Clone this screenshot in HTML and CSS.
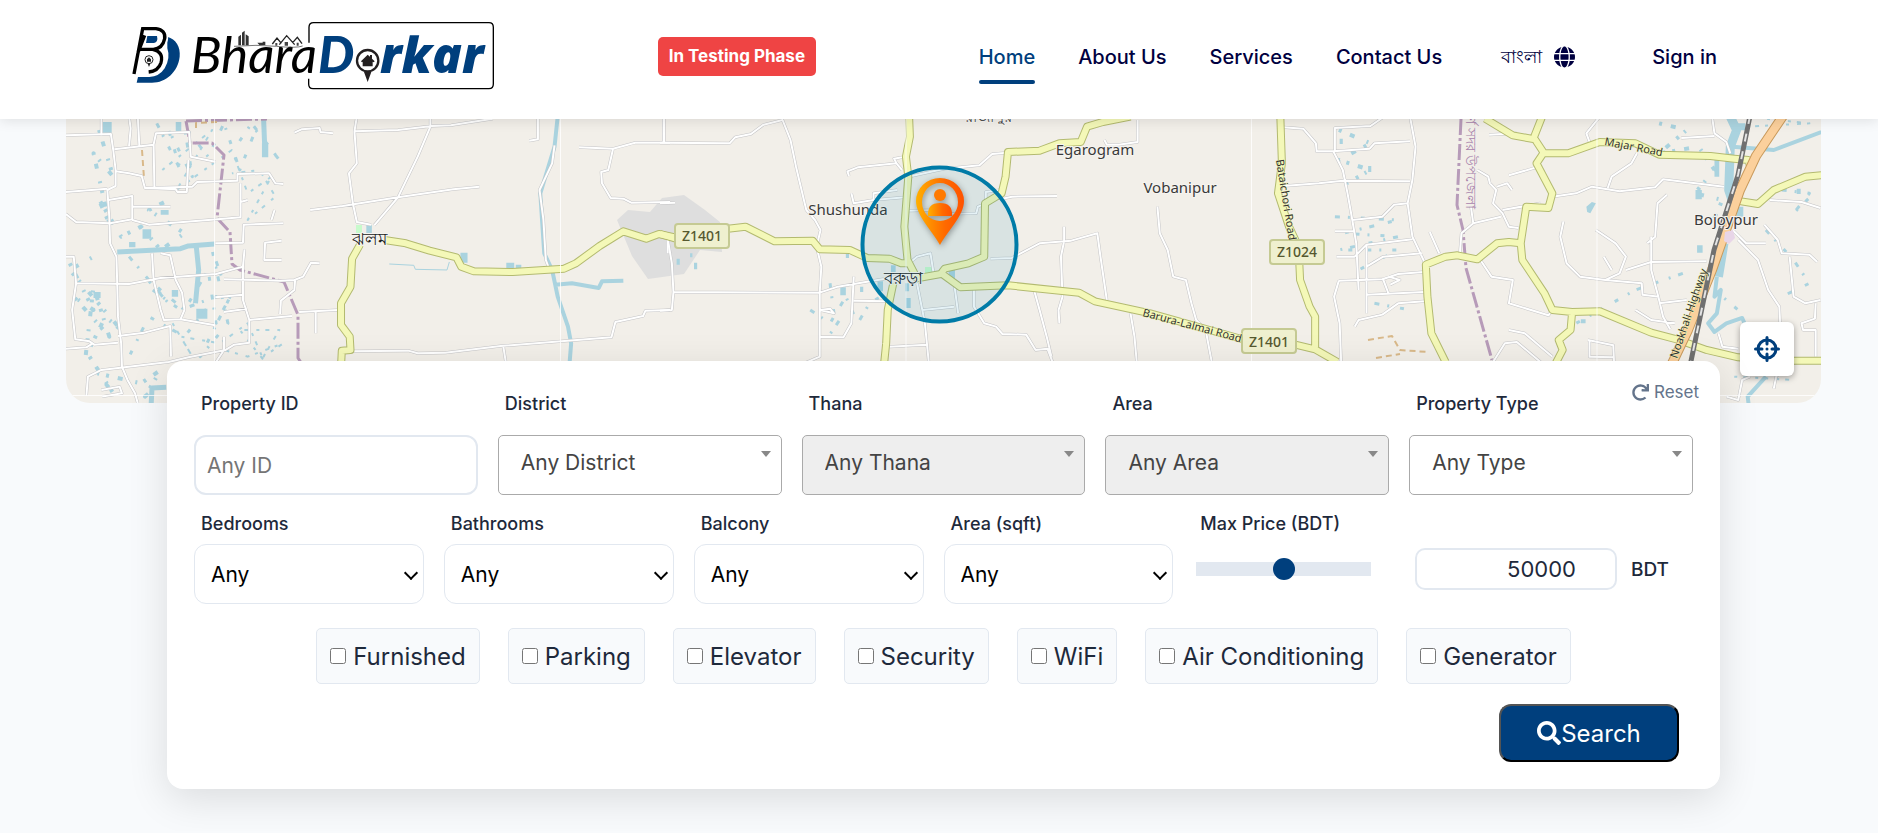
FILE: index.html
```html
<!DOCTYPE html>
<html lang="en">
<head>
<meta charset="utf-8">
<meta name="viewport" content="width=device-width, initial-scale=1">
<title>BharaDorkar</title>
<link rel="stylesheet" href="styles.css">
</head>
<body>
<header class="site-header">
  <a class="logo" href="#" aria-label="BharaDorkar">
    <svg viewBox="0 0 364 70">
      <g transform="scale(.33333) translate(-63 -63)">
        <path d="M172 110 C198 118 212 140 209 170 C204 215 168 248 126 248 H80 L84 231 H118 Q148 230 164 205 Q182 174 172 145 Z" fill="#003f7d"/>
        <path d="M72 221 L98 87 H140 Q168 90 164 118 Q158 146 130 148 H86 M128 148 Q162 156 153 188 Q145 213 116 216" fill="none" stroke="#fff" stroke-width="20"/>
        <path d="M72 222 L98 86 H138 Q168 90 164 116 Q158 146 130 148 H86 M84 158 L104 106 M128 148 Q162 156 153 188 Q145 213 116 216" fill="none" stroke="#000" stroke-width="10"/>
        <path d="M112 108 H141 Q145 126 132 129 H108 Z" fill="#003f7d"/>
        <circle cx="117" cy="179" r="12" fill="#fff" stroke="#222" stroke-width="3"/>
        <path d="M111 178 l6 -6 6 6 v7 h-12z M113 191 h8 l-4 10z" fill="#222"/>
        <text class="logo-light" x="242" y="218">Bhara</text>
        <path d="M372 139 Q440 133 500 139 T578 138" fill="none" stroke="#333" stroke-width="2"/>
        <path d="M385 136 V110 l8 -6 v32z M396 136 V98 l8 -6 v44z M407 136 V103 l9 6 v27z M442 128 h16 v-3 h8 v10 h-18z" fill="#333"/>
        <path d="M487 132 l14 -18 13 16 M508 134 l22 -27 24 27 M548 128 l14 -16 14 19" fill="none" stroke="#222" stroke-width="4"/>
        <path d="M524 137 v-11 h10 v11z M496 137 v-8 h6 v8z M560 137 v-9 h6 v9z" fill="#444"/>
        <path d="M597 128 V82 Q597 68 611 68 H1137 Q1150 68 1150 82 V252 Q1150 266 1137 266 H609 Q596 266 596 252 V236" fill="none" stroke="#000" stroke-width="4"/>
        <text class="logo-bold" x="624" y="218">D</text>
        <circle cx="773" cy="182" r="32" fill="#fff" stroke="#231f20" stroke-width="7"/>
        <path d="M762 216 H784 L773 246 Z M753 184 L773 164 780 170 V165 h6 v11 l8 8 -3 3 -3 -2 v14 h-30 v-14 l-2 2z" fill="#231f20"/>
        <text class="logo-bold logo-wide" x="810" y="218">rkar</text>
      </g>
    </svg>
  </a>
  <span class="badge">In Testing Phase</span>
  <nav class="nav">
    <a class="nav-link active" href="#">Home</a>
    <a class="nav-link" href="#">About Us</a>
    <a class="nav-link" href="#">Services</a>
    <a class="nav-link" href="#">Contact Us</a>
    <a class="nav-link lang" href="#"><span lang="bn">বাংলা</span>
      <svg viewBox="0 0 496 512" width="21" height="22" fill="currentColor" aria-hidden="true"><path d="M336.5 160C322 70.7 287.8 8 248 8s-74 62.7-88.5 152h177zM152 256c0 22.2 1.2 43.5 3.3 64h185.3c2.1-20.5 3.3-41.8 3.3-64s-1.2-43.5-3.3-64H155.3c-2.1 20.5-3.3 41.8-3.3 64zm324.7-96c-28.6-67.9-86.5-120.4-158-141.6 24.4 33.8 41.2 84.7 50 141.6h108zM177.2 18.4C105.8 39.6 47.8 92.1 19.3 160h108c8.7-56.9 25.5-107.8 49.9-141.6zM487.4 192H372.7c2.1 21 3.3 42.5 3.3 64s-1.2 43-3.3 64h114.6c5.5-20.5 8.6-41.8 8.6-64s-3.1-43.5-8.5-64zM120 256c0-21.5 1.2-43 3.3-64H8.6C3.2 212.5 0 233.8 0 256s3.2 43.5 8.6 64h114.6c-2-21-3.2-42.5-3.2-64zm39.5 96c14.5 89.3 48.7 152 88.5 152s74-62.7 88.5-152h-177zm159.3 141.6c71.4-21.2 129.4-73.7 158-141.6h-108c-8.8 56.9-25.6 107.8-50 141.6zM19.3 352c28.6 67.9 86.5 120.4 158 141.6-24.4-33.8-41.2-84.7-50-141.6h-108z"/></svg>
    </a>
    <a class="nav-link" href="#">Sign in</a>
  </nav>
</header>

<main class="page">
  <section class="map" aria-label="Map">
    <svg class="map-canvas" viewBox="66 119 1755 284" preserveAspectRatio="xMidYMid slice">
      <defs>
        <linearGradient id="pin" x1="0" x2="1"><stop offset="0" stop-color="#ffb000"/><stop offset=".6" stop-color="#ff6a00"/><stop offset="1" stop-color="#ff5200"/></linearGradient>
        <g id="lanes">
          <g transform="translate(50 110) scale(.3954 .3333)">
            <path d="M40 76 L154 72 160 120 166 180 166 228 145 240 150 320 152 400 168 440 170 520 172 620 180 700 182 770 196 810 215 850 222 880"/>
            <path d="M130 76 V20 M200 20 L204 55 200 108 M222 20 L226 108 M163 118 L262 104 268 70 352 66 356 140 418 155 M262 104 L264 230 M166 184 L200 190 232 198 240 234 318 238 322 246 346 246 350 150 M40 246 L145 236 M240 234 L360 230 372 216 474 212 474 192 554 190 570 220 590 222 M40 312 L66 336 152 340 208 328 208 258 148 270 M208 290 L305 290 M208 330 L250 344 424 328 482 322 482 220 M482 276 L500 270 M418 400 L488 398 490 344 590 340"/>
            <path d="M40 440 L60 440 66 520 200 522 280 504 420 492 488 470 492 418 M66 520 L56 600 64 688 100 694 112 704 172 698 M40 716 L92 712 108 700 M258 430 L262 510 280 600 288 630 330 628 340 600 334 548 318 510 304 436 280 430 M330 628 L418 646 M172 678 L238 668 304 648 306 740 M440 508 L584 512 618 510 640 500 660 458 682 460 M488 470 V570 L504 630 504 698 466 704 444 720 350 742 300 756 130 780 96 800 92 858 M418 562 L488 554 M440 606 L498 596 M504 630 L612 618 M620 508 L618 540 584 572 582 612 M630 606 L728 600 M672 606 V670 M130 840 L176 830 182 850 132 860 M586 392 L544 398 542 450 586 450 M568 300 L560 330 M440 680 V720 L420 756"/>
            <path d="M618 68 L636 58 682 54 684 66 716 70 M776 20 L770 64 880 60 966 48 1014 46 1120 26 M770 64 L776 160 756 190 766 280 776 336 812 344 M658 300 L740 288 880 262 1020 238 1086 230 M962 20 V50 L930 140 880 262 820 346 M1234 20 V88 L1212 92 M1276 106 L1270 160 1238 240 1248 330 1254 450 1266 488 M1338 112 L1424 116 1480 98 1568 98 M1552 98 V20 M1424 116 L1412 180 1394 186 1396 220 1418 264 1450 266 1470 278 1568 276 M750 724 L906 722 930 730 1000 728 1140 708 1420 682 1430 636 1500 618 1506 602 1568 600 M1146 706 L1156 780 M1562 390 V430"/>
          </g>
          <g transform="translate(660 110) scale(.3954 .3333)">
            <path d="M0 98 L176 100 190 82 230 72 262 44 310 30 330 90 344 170 356 230 370 300 392 330 406 360 396 410 408 470 404 546 404 740 364 760 M10 20 V98 M0 280 L38 278 M20 390 L30 460 34 546 30 600 0 602 M34 546 L404 548 450 530 520 516 600 500 M404 548 V600 L440 610 430 596 404 600 M404 680 L464 682 484 640 490 500 M490 572 L574 574 M478 198 L474 184 500 172 598 160 612 180 M598 160 L592 146 612 142 M484 250 L490 280 540 270 620 262 M540 270 V250 L600 240 M628 200 L720 176 808 166 840 132 878 128 M628 302 L700 300 720 312 800 310 804 290 826 280 M824 280 V246 L860 240"/>
            <path d="M620 470 L650 440 684 430 692 490 M650 520 L670 640 680 760 M580 710 L674 704 M664 600 L744 590 M744 520 L754 610 M794 530 V590 L820 640 850 650 866 672 926 674 950 720 980 716 994 760 M866 266 L890 260 1004 258 M836 446 L890 444 960 400 1040 392 1106 370 1114 440 1130 570 M1022 350 V394 L1014 440 1018 560 1008 600 1010 640 M946 540 L960 600 978 680 990 740 M1208 30 V96 L1160 104 1130 104 1124 90 M1258 290 L1264 370 1284 420 1298 500 1330 510 1344 580 1356 630 1380 660 1396 760 M1190 610 L1200 680 1206 760"/>
          </g>
          <g transform="translate(1240 110) scale(.3954 .3333)">
            <path d="M110 52 L160 56 192 100 194 124 236 124 328 116 340 100 430 94 M240 124 V54 L330 48 364 20 M430 20 L444 110 436 210 424 280 436 380 468 460 M110 228 L200 220 260 212 430 214 M236 124 L260 180 272 250 284 330 294 400 300 540 M284 330 L360 320 390 284 424 280 M240 364 H290 M244 440 H290 L320 404 436 388 M320 404 V610 M320 470 L362 440 460 430 M250 512 L360 508 400 492 464 486 M362 508 L376 552 M320 554 L466 546 M290 650 L300 630 360 614 400 580 466 574 M250 512 L238 560 252 640 256 760 M376 500 L404 510 380 524"/>
            <path d="M600 180 L628 200 632 220 648 240 640 280 664 310 680 350 704 354 M650 230 L676 220 688 240 M584 290 L590 340 560 370 556 430 M590 340 L660 320 M480 366 L504 430 M608 450 L636 500 690 510 680 580 780 616 790 600 M664 300 L760 280 M680 196 L750 172 M630 74 L700 70 M884 96 L876 70 910 20 M790 260 L850 250 890 230 960 244 1050 232 1070 208 1224 230 M930 234 L940 200 990 160 1004 130 M900 360 L950 400 976 440 960 490 924 510 860 500 826 460 810 380 818 334 M920 440 L940 480 M976 480 L1040 456 1180 454 M1080 254 L1056 280 1050 380 1030 400 M1040 380 V480 L1058 560 1070 620 1088 658 M924 510 L1016 520 1018 554 1060 560 M1000 600 L1040 630 1100 640 M1060 580 L1130 570"/>
            <path d="M640 756 L670 700 700 696 760 756 M680 660 L720 670 760 710 790 740 M880 690 L944 706 946 756 M884 690 V740 L946 742 M1116 84 L1200 78 M1194 20 L1200 70 1230 96 1240 130 M1340 270 L1420 276 1468 294 M1246 360 L1280 400 1330 400 M1260 390 L1310 450 1336 540 1364 590 1366 640 M1326 344 L1360 390 1370 430 1440 434 1460 456 M1390 440 L1400 560 1430 580 1468 570 M1456 580 L1454 626 1420 640 1424 660 1456 660 V740 M1210 670 L1220 710 1260 716 M1350 836 L1356 800 1380 770 M1230 860 L1260 870 1270 810 1290 800"/>
          </g>
        </g>
        <g id="highways">
          <g transform="translate(50 110) scale(.3954 .3333)">
            <path d="M846 390 L900 400 960 422 1028 442 1040 470 1072 484 1170 486 1300 476 1330 460 1390 408 1450 364 1508 386 1540 372 1610 390 M784 404 L764 446 760 530 736 580 736 645 758 680 760 720 738 722 736 770"/>
          </g>
          <g transform="translate(660 110) scale(.3954 .3333)">
            <path d="M630 20 L632 80 622 140 628 200 618 350 626 450 650 505 710 492 720 476 780 460 820 440 822 280 864 250 874 200 880 126 960 122 1010 100 1064 96 1080 50 1120 36 1190 20 M0 372 L40 386 M172 356 L216 350 290 394 386 392 404 418 480 420 524 444 580 446 610 460 634 460 M716 494 L760 532 880 526 1060 548 1100 574 1240 610 1480 690 M590 520 L576 600 572 700 566 770"/>
          </g>
          <g transform="translate(1240 110) scale(.3954 .3333)">
            <path d="M102 20 L106 160 96 250 124 350 148 410 152 510 176 590 190 620 190 712 M140 704 L190 718 246 756 M620 26 L690 76 746 88 768 128 750 160 790 250 780 294 724 290 710 400 680 396 650 400 600 448 550 436 520 440 470 464 474 560 484 670 520 756 M764 20 L744 80 M768 130 L830 130 910 96 1000 100 1060 134 1190 138 1250 146 1286 150 1290 170 M710 400 L714 450 770 550 790 600 840 606 910 604 1040 668 1110 690 1180 720 1260 742 1360 752 1470 752 M840 606 L836 660 806 690 816 720 794 770 M1256 272 L1310 282 1350 240 1430 200 1470 196"/>
          </g>
        </g>
      </defs>
      <rect x="66" y="119" width="1755" height="284" fill="#f2efe9"/>
      <path d="M617 220 L628 210 650 212 662 198 684 195 705 210 720 222 722 252 700 250 684 274 648 279 632 256Z" fill="#dedede"/>
      <path d="M356 225 h6 v9 h-6z M925 267 h7 v8 h-7z" fill="#c8facc"/>
      <g transform="translate(50 110) scale(.3954 .3333)">
        <g class="stream">
          <path d="M1284 20 L1276 110 1240 250 1250 430 1270 480 1284 560 1310 650 1318 700 1314 760 M1278 524 L1320 520 1388 534 1396 514 1450 512" stroke-width="4"/>
          <path d="M170 426 L330 416 350 408 416 402 M370 410 L376 480 368 580 M540 20 L544 140 M256 880 L258 834 294 832" stroke-width="5"/>
          <path d="M858 462 L920 466 924 478 1004 480 1010 456" stroke-width="1"/>
        </g>
        <g class="pond">
          <path d="M130 36h26v32h-26z M318 36h14v34h-14z M536 100h16v42h-16z M234 358h22v28h-22z M370 596h28v30h-28z M800 346h14v24h-14z M1038 428h18v30h-18z M1154 458h20v16h-20z M1178 464h14v14h-14z M110 546h18v18h-18z M308 540h16v20h-16z M200 396h16v16h-16z M280 300h20v14h-20z"/>
        </g>
        <g class="ponds">
          <path class="d1" d="M124 60 L160 200 110 130 150 340 120 260 180 380 230 350 280 420 340 370 250 300 300 270"/>
          <path class="d2" d="M270 40 L330 180 300 60 360 200 340 50 400 140 440 40 480 180 520 60 580 150 510 40 470 110"/>
          <path class="d3" d="M284 180 L410 60 320 240 460 120 500 250 560 200 500 330 570 260 530 180 460 190"/>
          <path class="d1" d="M50 460 L110 600 60 560 150 680 110 530 90 740 140 620 180 660 50 480 110 440"/>
          <path class="d2" d="M200 440 L300 580 240 500 340 600 400 480 420 640 460 550 380 740 450 640 410 420 440 520"/>
          <path class="d3" d="M310 640 L360 740 330 680 430 700 500 640 540 750 480 660 580 660 540 740 590 700 500 740 440 720"/>
          <path class="d1" d="M100 740 L160 850 120 790 230 820 280 780 240 860 270 830"/>
          <path class="d2" d="M260 540 L330 600 420 560 340 680 250 620 200 740"/>
        </g>
      </g>
      <g transform="translate(660 110) scale(.3954 .3333)">
        <path class="pond" d="M584 466h12v20h-12z M730 480h16v30h-16z M622 564h12v30h-12z M550 514h14v30h-14z M456 532h14v24h-14z M620 520h10v24h-10z M506 530h8v16h-8z M42 446h8v18h-8z M76 430h6v12h-6z M86 458h8v20h-8z M470 432h8v12h-8z"/>
        <path class="ponds d2" d="M380 600 L430 640 470 560 500 640 530 580 600 530 M430 520 L440 610 460 620 420 690"/>
      </g>
      <g transform="translate(1240 110) scale(.3954 .3333)">
        <g class="stream">
          <path d="M1240 20 L1256 60 1240 110 1236 240 1250 290 M1224 400 L1210 500" stroke-width="9"/>
          <path d="M1246 110 L1350 120 1470 66 M1206 500 L1200 560 1216 540 1206 610 1184 640 1200 666 1230 640 1270 624 1276 640 M1330 800 L1284 860 1286 880" stroke-width="4"/>
          <path d="M1250 50 h28 M1264 290 V320" stroke-width="7"/>
        </g>
        <path class="pond" d="M876 290 l14 -14 10 4 -14 30 -8 -4z M862 628h12v12h-12z M1152 240h16v28h-16z M1156 406h14v22h-14z M1200 150h12v50h-12z M324 168h8v18h-8z M252 86h8v16h-8z M1408 236h10v16h-10z"/>
        <g class="ponds">
          <path class="d1" d="M250 60 L330 100 250 150 330 180 270 220"/>
          <path class="d2" d="M240 320 L400 330 260 370 400 380 250 420 400 420 300 480 280 500 M340 580 L430 600"/>
          <path class="d1" d="M1060 40 L1130 60 1060 130 1160 110 1200 180 1150 250 1220 270 1190 350"/>
          <path class="d2" d="M1370 240 L1440 250 1400 310 1460 240 M1330 360 L1400 450 1440 520 1370 560 M1120 490 L1000 540 850 640 M1200 540 L1260 600"/>
          <path class="d3" d="M1280 20 L1440 40 1280 50 M1250 800 L1400 810"/>
        </g>
      </g>
      <g class="boundary">
        <path d="M186 121 L267 119 M186 121 L190 143 212 143 224 155 217 218 230 232 232 264 240 270 284 282 298 315 298 358 302 364"/>
        <path d="M1461 119 L1457 205 1463 230 1466 268 1492 360"/>
      </g>
      <g class="track"><path d="M142 150 L144 178 M196 128 V123 L218 122 M1368 340 L1392 336 1400 350 1428 352 M1376 358 L1400 354"/></g>
      <use href="#lanes" class="lane-case"/><use href="#lanes" class="lane"/>
      <use href="#highways" class="road-case"/><use href="#highways" class="road"/>
      <path class="trunk-case" d="M1785 113 L1756 156 1740 190 1712 270 1688 330 1668 372"/>
      <path class="trunk" d="M1785 113 L1756 156 1740 190 1712 270 1688 330 1668 372"/>
      <path class="rail" d="M1750 116 L1738 175 1714 250 1690 366"/>
      <path class="rail-dash" d="M1750 116 L1738 175 1714 250 1690 366"/>
      <path d="M1725 232 l8 -2 2 8 -6 6 -5 -3z" fill="#e8d5e8"/>
      <path d="M214.500 119V403 M560.500 119V403 M906 119V403 M1251.500 119V403 M1597 119V403 M66 395.500H1821" stroke="#fff" stroke-opacity=".8" fill="none"/>
      <g class="shield">
        <rect x="675" y="224" width="54" height="24" rx="3"/><rect x="1270" y="240" width="54" height="24" rx="3"/><rect x="1242" y="329" width="54" height="24" rx="3"/>
      </g>
      <g class="shield-text"><text x="702" y="241">Z1401</text><text x="1297" y="257">Z1024</text><text x="1269" y="347">Z1401</text></g>
      <g class="place">
        <text x="1095" y="155">Egarogram</text><text x="1180" y="193">Vobanipur</text><text x="848" y="215">Shushunda</text><text x="1726" y="225">Bojoypur</text>
        <text class="bn" x="369" y="245">ঝলম</text><text class="bn" x="903" y="284">বরুড়া</text><text x="988" y="122">রাজাপুর</text>
      </g>
      <g class="street">
        <text transform="translate(1276 160) rotate(81)">Bataichori Road</text>
        <text transform="translate(1142 316) rotate(15)">Barura-Lalmai Road</text>
        <text transform="translate(1604 145) rotate(11)">Majar Road</text>
        <text transform="translate(1677 359) rotate(-71)">Noakhali Highway</text>
      </g>
      <text class="district" transform="translate(1466 116) rotate(90)">র্ণ সদর উপজেলা</text>
      <circle cx="939.500" cy="244.500" r="77" fill="#007ba7" fill-opacity=".1" stroke="#007ba7" stroke-width="4"/>
      <g class="marker">
        <path fill-rule="evenodd" fill="url(#pin)" d="M940 245 C932 230 916 216 916 201 A24 23 0 0 1 964 201 C964 216 948 230 940 245Z M940 183 A18 19 0 1 0 940 221 A18 19 0 1 0 940 183Z"/>
        <path fill="url(#pin)" d="M928 216 Q927 203 940 203 Q953 203 952 216Z"/><circle cx="940" cy="195" r="6" fill="#ff7a00"/>
      </g>
    </svg>
    <button class="locate" type="button" aria-label="My location">
      <svg viewBox="0 0 26 26" width="26" height="26" fill="none" stroke="currentColor" stroke-width="3" stroke-linecap="round"><circle cx="13" cy="13" r="9"/><path d="M13 1.500V8M13 18v6.500M1.500 13H8M18 13h6.500"/><circle cx="13" cy="13" r="1.500" fill="currentColor" stroke="none"/></svg>
    </button>
  </section>

  <form class="card">
    <button class="reset" type="reset"><svg viewBox="0 0 512 512" width="17" height="17" fill="currentColor" aria-hidden="true"><path d="M500.330 0h-47.410a12 12 0 0 0-12 12.570l4 82.760A247.420 247.420 0 0 0 256 8C119.340 8 7.900 119.530 8 256.190 8.100 393.070 119.100 504 256 504a247.100 247.100 0 0 0 166.180-63.910 12 12 0 0 0 .48-17.430l-34-34a12 12 0 0 0-16.380-.55A176 176 0 1 1 402.100 157.800l-101.530-4.870a12 12 0 0 0-12.570 12v47.410a12 12 0 0 0 12 12h200.330a12 12 0 0 0 12-12V12a12 12 0 0 0-12-12z"/></svg>Reset</button>

    <div class="row-main">
      <div class="field"><label for="pid">Property ID</label><input class="control text-input" id="pid" type="text" placeholder="Any ID"></div>
      <div class="field"><label for="district">District</label><div class="combo"><select class="control" id="district"><option>Any District</option></select></div></div>
      <div class="field"><label for="thana">Thana</label><div class="combo"><select class="control" id="thana" disabled><option>Any Thana</option></select></div></div>
      <div class="field"><label for="area">Area</label><div class="combo"><select class="control" id="area" disabled><option>Any Area</option></select></div></div>
      <div class="field"><label for="type">Property Type</label><div class="combo"><select class="control" id="type"><option>Any Type</option></select></div></div>
    </div>

    <div class="row-detail">
      <div class="field"><label for="beds">Bedrooms</label><div class="picker"><select class="control" id="beds"><option>Any</option></select></div></div>
      <div class="field"><label for="baths">Bathrooms</label><div class="picker"><select class="control" id="baths"><option>Any</option></select></div></div>
      <div class="field"><label for="balcony">Balcony</label><div class="picker"><select class="control" id="balcony"><option>Any</option></select></div></div>
      <div class="field"><label for="sqft">Area (sqft)</label><div class="picker"><select class="control" id="sqft"><option>Any</option></select></div></div>
      <div class="field"><label for="price">Max Price (BDT)</label>
        <div class="price">
          <input class="slider" id="price" type="range" min="0" max="100000" value="50000">
          <input class="amount" type="number" value="50000" aria-label="Max price amount">
          <span class="unit">BDT</span>
        </div>
      </div>
    </div>

    <div class="amenities">
      <label class="amenity"><input type="checkbox">Furnished</label>
      <label class="amenity"><input type="checkbox">Parking</label>
      <label class="amenity"><input type="checkbox">Elevator</label>
      <label class="amenity"><input type="checkbox">Security</label>
      <label class="amenity"><input type="checkbox">WiFi</label>
      <label class="amenity"><input type="checkbox">Air Conditioning</label>
      <label class="amenity"><input type="checkbox">Generator</label>
    </div>

    <div class="actions">
      <button class="search" type="submit"><svg viewBox="0 0 512 512" width="24" height="24" fill="currentColor" aria-hidden="true"><path d="M505 442.700L405.300 343c-4.500-4.500-10.600-7-17-7H372c27.600-35.300 44-79.700 44-128C416 93.100 322.900 0 208 0S0 93.100 0 208s93.100 208 208 208c48.300 0 92.700-16.400 128-44v16.300c0 6.400 2.500 12.500 7 17l99.700 99.700c9.400 9.400 24.600 9.400 33.900 0l28.300-28.300c9.400-9.400 9.400-24.600.1-34zM208 336c-70.700 0-128-57.200-128-128 0-70.700 57.200-128 128-128 70.700 0 128 57.200 128 128 0 70.700-57.200 128-128 128z"/></svg>Search</button>
    </div>
  </form>
</main>
</body>
</html>
```

FILE: styles.css
```css
* { box-sizing: border-box; }
body {
  margin: 0;
  background: #f8fafc;
  color: #1e293b;
  font-family: Inter, "Noto Sans", sans-serif;
}
button, input, select { font-family: inherit; margin: 0; }

.site-header {
  position: relative;
  z-index: 5;
  display: flex;
  align-items: center;
  justify-content: space-between;
  min-height: 119px;
  padding: 0 161px 6px 131px;
  background: #fff;
  box-shadow: 0 2px 12px rgba(0, 0, 0, .1);
}
.logo { margin-bottom: 2px; }
.logo svg { display: block; width: 364px; height: 70px; }
.logo-light { font: italic 400 154px Lato, sans-serif; fill: #000; }
.logo-bold { font: italic 900 154px Lato, sans-serif; fill: #003f7d; }
.logo-wide { font: italic 800 148px "Open Sans", sans-serif; }
.badge {
  padding: 8px 11px;
  border-radius: 5px;
  background: #ef4444;
  color: #fff;
  font-size: 17px;
  font-weight: 700;
  line-height: 23px;
}
.nav { display: flex; align-items: center; gap: 43px; }
.nav-link {
  position: relative;
  color: #000040;
  font-size: 20px;
  font-weight: 500;
  line-height: 24px;
  text-decoration: none;
}
.nav-link.active { color: #003f7d; }
.nav-link.active::after {
  content: "";
  position: absolute;
  left: 0;
  right: 0;
  bottom: -15px;
  height: 4px;
  border-radius: 2px;
  background: #003f7d;
}
.lang { display: flex; align-items: center; gap: 12px; margin: 0 34px 0 16px; }
.lang span { font-size: 18px; }

.page { padding: 0 57px 42px 66px; }
.map { position: relative; height: 284px; }
.map-canvas {
  display: block;
  width: 100%;
  height: 100%;
  border-radius: 0 0 24px 24px;
}
.map-canvas path {
  vector-effect: non-scaling-stroke;
  stroke-linejoin: round;
}
.stream { fill: none; stroke: #aad3df; }
.pond { fill: #aad3df; }
.ponds, .ponds path { fill: none; stroke: #aad3df; }
.d1 { stroke-width: 4px; stroke-dasharray: 3 9 5 13 2 7; }
.d2 { stroke-width: 3px; stroke-dasharray: 5 8 2 11 4 14; }
.d3 { stroke-width: 2px; stroke-dasharray: 3 6 4 8; }
.boundary { fill: none; stroke: #b79bb9; stroke-width: 3px; stroke-dasharray: 16 3 3 3; }
.track { fill: none; stroke: #d9b98a; stroke-width: 2px; stroke-dasharray: 6 4; }
.lane-case { fill: none; stroke: #c4c4c6; stroke-width: 3px; }
.lane { fill: none; stroke: #fff; stroke-width: 2px; }
.road-case { fill: none; stroke: #b3ba70; stroke-width: 8px; }
.road { fill: none; stroke: #f4f8b8; stroke-width: 6px; }
.trunk-case { fill: none; stroke: #c99a5c; stroke-width: 10px; }
.trunk { fill: none; stroke: #fbd09c; stroke-width: 8px; }
.rail { fill: none; stroke: #707070; stroke-width: 5px; }
.rail-dash { fill: none; stroke: #e4e4e4; stroke-width: 2px; stroke-dasharray: 8 10; }
.shield { fill: #eff0cf; stroke: #c5ca93; stroke-width: 2px; }
.shield-text { font: 500 14px "Noto Sans", sans-serif; fill: #56592f; text-anchor: middle; }
.place {
  font: 15px "Noto Sans", sans-serif;
  fill: #3a3a3a;
  text-anchor: middle;
  stroke: #f6f4f0;
  stroke-width: 2px;
  paint-order: stroke;
}
.place .bn { font-size: 17px; fill: #222; }
.street {
  font: 11px "Noto Sans", sans-serif;
  fill: #333;
  stroke: #f4f8b8;
  stroke-width: 1px;
  paint-order: stroke;
}
.district { font: 14px "Noto Sans", sans-serif; fill: #a884ac; }
.marker { filter: drop-shadow(1px 2px 3px rgba(0, 0, 0, .35)); }
.locate {
  position: absolute;
  right: 27px;
  bottom: 27px;
  display: grid;
  place-items: center;
  width: 54px;
  height: 54px;
  padding: 0;
  border: 0;
  border-radius: 6px;
  background: #fff;
  color: #003f7d;
  box-shadow: 0 2px 6px rgba(0, 0, 0, .35);
}

.card {
  position: relative;
  margin: -42px 101px 0;
  padding: 32px 27px 27px;
  border-radius: 16px;
  background: #fff;
  box-shadow: 0 10px 40px rgba(0, 0, 0, .12);
}
.reset {
  position: absolute;
  top: 20px;
  right: 21px;
  display: flex;
  align-items: center;
  gap: 5px;
  padding: 0;
  border: 0;
  background: none;
  color: #64748b;
  font-size: 17px;
  line-height: 22px;
}
.row-main { display: grid; grid-template-columns: repeat(5, 1fr); gap: 20px; }
.row-detail {
  display: grid;
  grid-template-columns: repeat(4, 23fr) 50fr;
  gap: 20px;
  margin-top: 18px;
}
.field { display: flex; flex-direction: column; gap: 9px; min-width: 0; }
.row-main .field { gap: 20px; }
.field label {
  padding-left: 7px;
  font-size: 18px;
  font-weight: 500;
  line-height: 22px;
}
.control {
  display: block;
  width: 100%;
  height: 60px;
  background-color: #fff;
  font-size: 21px;
}
.text-input { padding: 0 11px; border: 2px solid #e2e8f0; border-radius: 12px; }
.text-input::placeholder { color: #757575; }
.combo, .picker { position: relative; }
.combo .control {
  appearance: none;
  padding: 0 30px 5px 22px;
  border: 1px solid #aaa;
  border-radius: 5px;
  color: #444;
}
.combo .control:disabled { background-color: #eee; opacity: 1; }
.combo::after {
  content: "";
  position: absolute;
  top: 16px;
  right: 11px;
  border: solid transparent;
  border-width: 6px 5px 0;
  border-top-color: #888;
  pointer-events: none;
}
.picker .control {
  appearance: none;
  padding: 0 30px 0 16px;
  border: 1px solid #e2e8f0;
  border-radius: 12px;
  color: #000;
}
.picker::after {
  content: "";
  position: absolute;
  top: 24px;
  right: 8px;
  width: 8px;
  height: 8px;
  border: solid #000;
  border-width: 0 2px 2px 0;
  transform: rotate(45deg);
  pointer-events: none;
}
.price { display: flex; align-items: center; padding: 4px 24px 0 3px; }
.slider {
  appearance: none;
  width: 175px;
  height: 14px;
  background: #e2e8f0;
}
.slider::-webkit-slider-thumb {
  appearance: none;
  width: 22px;
  height: 22px;
  border-radius: 50%;
  background: #003f7d;
}
.amount {
  flex: 1;
  min-width: 0;
  height: 42px;
  margin: 0 14px 0 44px;
  padding: 0 24px 0 10px;
  border: 2px solid #e2e8f0;
  border-radius: 10px;
  color: #1e293b;
  font-size: 22px;
  text-align: right;
}
.unit { font-size: 19px; font-weight: 500; }

.amenities {
  display: flex;
  flex-wrap: wrap;
  justify-content: center;
  gap: 28px;
  margin-top: 24px;
}
.amenity {
  display: flex;
  align-items: center;
  gap: 7px;
  min-height: 56px;
  padding: 0 13px;
  border: 1px solid #e2e8f0;
  border-radius: 5px;
  background: #f8fafc;
  font-size: 24px;
}
.amenity input { width: 16px; height: 16px; }
.actions { display: flex; justify-content: flex-end; margin-top: 20px; padding-right: 14px; }
.search {
  display: flex;
  align-items: center;
  justify-content: center;
  width: 180px;
  height: 58px;
  padding: 0;
  border: 2px outset #000;
  border-radius: 12px;
  background: #003f7d;
  color: #fff;
  font-size: 24px;
}
```
